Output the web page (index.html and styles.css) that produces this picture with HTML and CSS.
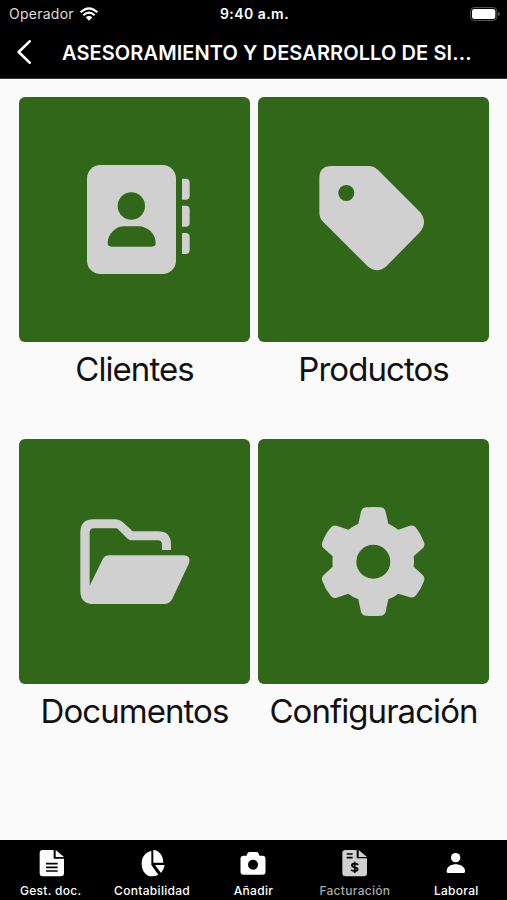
FILE: index.html
```html
<!DOCTYPE html>
<html lang="es">
<head>
  <meta charset="UTF-8" />
  <meta name="viewport" content="width=device-width, initial-scale=1.0"/>
  <title>Facturación</title>
  <link rel="stylesheet" href="styles.css">
</head>
<body>
  <header>
    <div class="status">
      <div class="carrier">
        <span>Operador</span>
        <svg class="wifi" viewBox="0 0 54 42">
          <path d="M2 16Q27 -8 52 16M10 25Q27 9 44 25" fill="none" stroke="#fff" stroke-width="6"/>
          <path d="M17 31Q27 23 37 31L27 41Z" fill="#fff"/>
        </svg>
      </div>
      <div class="clock">9:40 a.m.</div>
      <svg class="battery" viewBox="0 0 90 42">
        <rect x="1.5" y="1.5" width="79" height="39" rx="11" fill="none" stroke="#555" stroke-width="3"/>
        <rect x="6" y="6" width="70" height="30" rx="7" fill="#fff"/>
        <path d="M84 15Q90 17 90 21Q90 25 84 27Z" fill="#555"/>
      </svg>
    </div>
    <div class="title-bar">
      <svg class="back" viewBox="0 0 42 72"><path d="M38 4L5 36L38 68" fill="none" stroke="#fff" stroke-width="8" stroke-linecap="round" stroke-linejoin="round"/></svg>
      <h1>ASESORAMIENTO Y DESARROLLO DE SI...</h1>
    </div>
  </header>

  <main>
    <a class="card">
      <div class="tile">
        <svg viewBox="6 21 378 378">
          <rect x="51" y="45" width="267" height="327" rx="40"/>
          <path d="M336 86H347Q359 86 359 98V137Q359 149 347 149H336ZM336 167H347Q359 167 359 179V218Q359 230 347 230H336ZM336 249H347Q359 249 359 261V300Q359 312 347 312H336Z"/>
          <circle class="hole" cx="184" cy="168" r="41"/>
          <path class="hole" d="M163 229H206A51 51 0 0 1 257 280Q257 290 245 290H125Q113 290 113 280A51 51 0 0 1 163 229Z"/>
        </svg>
      </div>
      <span class="label">Clientes</span>
    </a>
    <a class="card">
      <div class="tile">
        <svg viewBox="33 21 378 378">
          <path d="M94 48H206Q222 48 234 60L360 186Q384 216 360 246L259 349Q231 373 203 349L70 216Q58 204 58 188V84Q58 48 94 48Z"/>
          <circle class="hole" cx="139" cy="129" r="24"/>
        </svg>
      </div>
      <span class="label">Productos</span>
    </a>
    <a class="card">
      <div class="tile">
        <svg viewBox="21 -3 378 378">
          <path d="M46 98Q46 58 86 58H151Q164 58 173 66L203 94H278Q318 94 318 134V150H291V134Q291 121 278 121H200Q193 121 188 116L156 85H86Q74 85 74 98V257L113 178Q119 166 132 166H357Q379 168 372 190L322 296Q314 312 297 312H86Q46 312 46 272Z"/>
        </svg>
      </div>
      <span class="label">Documentos</span>
    </a>
    <a class="card">
      <div class="tile">
        <svg viewBox="18 12 378 378">
          <path d="M183 37Q205 35 227 37Q239 38 242 50L250 86Q266 93 280 104L315 92Q326 89 333 98Q348 116 357 142Q361 152 353 160L326 184Q328 200 326 215L353 240Q361 248 357 258Q348 283 333 301Q326 310 315 307L280 296Q266 307 250 313L242 350Q239 361 227 362Q205 364 183 362Q171 361 168 350L160 313Q144 307 130 296L95 308Q84 311 77 302Q61 283 52 258Q48 248 56 240L83 215Q82 200 83 184L56 160Q48 152 52 142Q61 116 77 98Q84 89 95 92L130 104Q144 93 160 86L168 50Q171 38 183 37Z"/>
          <circle class="hole" cx="205" cy="200" r="51"/>
        </svg>
      </div>
      <span class="label">Configuración</span>
    </a>
  </main>

  <nav>
    <a>
      <svg viewBox="107 39 90 90">
        <path d="M127 45H160V71H191V115Q191 124 182 124H127Q118 124 118 115V54Q118 45 127 45ZM166 45L191 66H166Z"/>
        <path class="line" d="M137 86H172M137 97H172M137 108H172"/>
      </svg>
      <span>Gest. doc.</span>
    </a>
    <a>
      <svg viewBox="411 39 90 90">
        <path d="M454 48V90L475 119Q467 124 456 124C438 124 425 108 425 86C425 66 436 51 454 48ZM460 45C477 46 490 61 490 83H460ZM465 90H494Q492 104 483 114Z"/>
      </svg>
      <span>Contabilidad</span>
    </a>
    <a>
      <svg viewBox="715.5 39 90 90">
        <path d="M732 62H741L744 55Q746 51 751 51H770Q775 51 777 55L780 62H789Q798 62 798 71V110Q798 119 789 119H732Q723 119 723 110V71Q723 62 732 62Z"/>
        <circle class="dark" cx="760.5" cy="89" r="15"/>
      </svg>
      <span>Añadir</span>
    </a>
    <a class="active">
      <svg viewBox="261 39 90 90">
        <path d="M277 45H311V70H342V115Q342 124 333 124H277Q268 124 268 115V54Q268 45 277 45ZM317 45L342 66H317Z"/>
        <path class="line" d="M281 57H299M281 68H299"/>
        <path class="line" d="M316 89Q311 86 305 86C294 86 294 95 305 97C318 99 316 108 305 108Q299 108 294 105M305 80V114"/>
      </svg>
      <span>Facturación</span>
    </a>
    <a>
      <svg viewBox="565 39 90 90">
        <circle cx="609" cy="68" r="14"/>
        <path d="M582 107C583 94 597 88 609 88C621 88 636 94 637 107V110Q637 114 632 114H587Q582 114 582 110Z"/>
      </svg>
      <span>Laboral</span>
    </a>
  </nav>
</body>
</html>
```
FILE: styles.css
```css
* {
  box-sizing: border-box;
}

body {
  font-family: Inter, sans-serif;
  margin: 0;
  height: 900px;
  display: flex;
  flex-direction: column;
  background: #fafafa;
  overflow: hidden;
}

svg {
  display: block;
}

header {
  background: #000;
  color: #fff;
  height: 79px;
  border-bottom: 1px solid #333;
}

.status {
  display: grid;
  grid-template-columns: 1fr auto 1fr;
  align-items: center;
  height: 27px;
  padding: 0 7px 0 9px;
  font-size: 14px;
}

.carrier {
  display: flex;
  align-items: center;
  gap: 6px;
  color: #ddd;
  letter-spacing: 0.25px;
}

.wifi {
  width: 18px;
  height: 14px;
}

.clock {
  font-weight: 600;
  letter-spacing: 0.45px;
}

.battery {
  width: 30px;
  height: 14px;
  justify-self: end;
}

.title-bar {
  display: flex;
  align-items: center;
  height: 50px;
  padding-left: 17px;
}

.back {
  width: 14px;
  height: 24px;
}

h1 {
  margin: 1px 0 0 31px;
  font-size: 20px;
  font-weight: 600;
  letter-spacing: 0.1px;
  white-space: nowrap;
}

main {
  flex: 1;
  display: grid;
  grid-template-columns: 231px 231px;
  grid-auto-rows: 342px;
  column-gap: 8px;
  padding: 18px 0 0 19px;
}

.tile {
  height: 245px;
  border-radius: 6px;
  background: #306718;
  display: flex;
  align-items: center;
  justify-content: center;
}

.tile svg {
  width: 126px;
  height: 126px;
  fill: #d0d0d0;
}

.tile .hole {
  fill: #306718;
}

.label {
  display: block;
  margin-top: 7px;
  font-size: 33px;
  line-height: 40px;
  letter-spacing: -0.95px;
  text-align: center;
  color: #111;
}

nav {
  display: grid;
  grid-template-columns: repeat(5, 1fr);
  height: 60px;
  padding-top: 8px;
  background: #000;
}

nav a {
  display: flex;
  flex-direction: column;
  align-items: center;
  color: #fff;
  fill: #fff;
  font-size: 12px;
  font-weight: 500;
  line-height: 15px;
  letter-spacing: 0.3px;
}

nav svg {
  width: 30px;
  height: 30px;
  margin-bottom: 5px;
}

nav .line {
  fill: none;
  stroke: #000;
  stroke-width: 5;
}

nav .dark {
  fill: #000;
}

nav .active {
  color: #aaa;
  fill: #d0d0d0;
}
```
